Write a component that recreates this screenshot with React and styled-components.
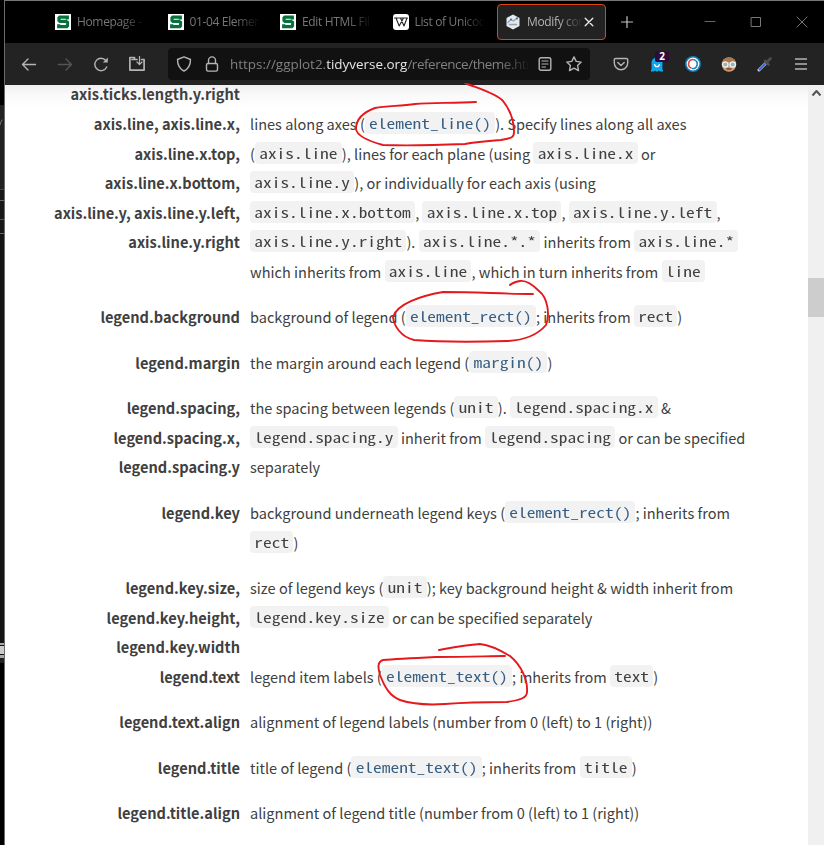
import React from "react";
import styled, { createGlobalStyle, css } from "styled-components";

const Global = createGlobalStyle`
  *, *::before, *::after { box-sizing: border-box; }
  html, body { margin: 0; background: #000; overflow: hidden; }
`;

const Screen = styled.div`
  width: 824px;
  height: 845px;
  display: flex;
  overflow: hidden;
  background: #000;
`;

const BackStrip = styled.div`
  width: 4px;
  flex: none;
  display: flex;
  flex-direction: column;
  background: #000;
`;
const BackPiece = styled.div`
  flex: none;
  overflow: hidden;
  height: ${(p) => p.$h}px;
  background: ${(p) => p.$bg};
`;

const Browser = styled.div`
  width: 820px;
  flex: none;
  display: flex;
  flex-direction: column;
  border-left: 1px solid #6b6b6b;
  border-top: 1px solid #777;
`;

const TabStrip = styled.div`
  height: 42px;
  flex: none;
  display: flex;
  align-items: center;
  padding-left: 40px;
  background: #000;
`;
const Tab = styled.div`
  width: 108.5px;
  height: 36px;
  flex: none;
  margin: 0 2px;
  padding: 0 0 0 7px;
  display: flex;
  align-items: center;
  border: 1px solid transparent;
  border-radius: 4px;
  color: #777;
  ${(p) =>
    p.$active &&
    css`
      background: #222;
      border-color: #d9480f;
      color: #b5b5b5;
    `}
`;
const TabTitle = styled.span`
  width: ${(p) => p.$w}px;
  margin-left: 6px;
  overflow: hidden;
  white-space: nowrap;
  font: 12px/20px "Open Sans", "Noto Sans", sans-serif;
  letter-spacing: -0.35px;
  mask-image: linear-gradient(to right, #000 ${(p) => p.$w - 26}px, transparent ${(p) => p.$w - 1}px);
`;
const IconSlot = styled.span`
  width: ${(p) => p.$w || 36}px;
  height: 32px;
  flex: none;
  display: flex;
  align-items: center;
  justify-content: center;
  position: relative;
`;
const WindowButtons = styled.div`
  margin-left: auto;
  margin-right: -1px;
  display: flex;
`;

const Toolbar = styled.div`
  height: 42px;
  flex: none;
  display: flex;
  align-items: center;
  padding-left: 6px;
  background: #232323;
`;
const UrlBar = styled.div`
  width: 422px;
  height: 32px;
  flex: none;
  margin: 0 13px;
  padding-left: 2px;
  display: flex;
  align-items: center;
  border-radius: 4px;
  background: #111;
`;
const Url = styled.span`
  width: 300px;
  margin-left: 4px;
  overflow: hidden;
  white-space: nowrap;
  color: #808080;
  font: 13.45px/22px "Open Sans", "Noto Sans", sans-serif;
  mask-image: linear-gradient(to right, #000 270px, transparent 300px);
`;
const Domain = styled.span`
  color: #e4e4e4;
`;
const UrlPath = styled.span`
  letter-spacing: -0.45px;
`;
const Badge = styled.span`
  position: absolute;
  left: 16px;
  top: 3px;
  width: 14px;
  height: 11px;
  border-radius: 2px;
  background: #300a3a;
  color: #fff;
  text-align: center;
  font: bold 10px/11px "Open Sans", sans-serif;
`;

const Viewport = styled.div`
  flex: 1;
  min-height: 0;
  display: flex;
  position: relative;
  background: #fff;
`;
const Page = styled.main`
  width: 803px;
  flex: none;
  overflow: hidden;
  background: linear-gradient(to bottom, #f1eff1 0, #f9f9f9 9px, #fff 24px);
`;
const Definitions = styled.dl`
  margin: -5.6px 0 0;
  display: flex;
  flex-direction: column;
  color: #404040;
  font-family: "Noto Sans CJK SC", "Open Sans", sans-serif;
  font-size: 14.55px;
  line-height: 29.55px;
`;
const Entry = styled.div`
  display: grid;
  grid-template-columns: 235px 1fr;
  column-gap: 10px;
  margin-bottom: ${(p) => (p.$tight ? 0 : 16)}px;
`;
const Term = styled.dt`
  font-weight: 700;
  font-size: 14.6px;
  text-align: right;
`;
const Detail = styled.dd`
  margin: 0;
`;
const Line = styled.div`
  height: 29.55px;
  white-space: nowrap;
`;
const Code = styled.code`
  display: inline-block;
  height: 22px;
  padding: 0 4.3px;
  vertical-align: -1px;
  border-radius: 4px;
  background: #f2f2f2;
  color: ${(p) => (p.$link ? "#375f84" : "#404040")};
  font-family: "Noto Sans Mono CJK SC", "Liberation Mono", monospace;
  font-size: 17.4px;
  line-height: 22px;
  vertical-align: baseline;
`;
const CodeText = styled.span`
  display: block;
  transform: scaleY(0.8);
`;

const Scrollbar = styled.div`
  width: 16px;
  flex: none;
  display: flex;
  flex-direction: column;
  align-items: center;
  background: #f0f0f0;
`;
const ScrollThumb = styled.div`
  width: 16px;
  height: 39px;
  margin-top: 177px;
  background: #cdcdcd;
`;
const Ink = styled.svg`
  position: absolute;
  left: -5px;
  top: -85px;
  width: 824px;
  height: 845px;
  pointer-events: none;
  clip-path: inset(83px 0 0 0);
`;

const stroke = { fill: "none", stroke: "#b4b4b4", strokeWidth: 1.4, strokeLinecap: "round", strokeLinejoin: "round" };

const Glyph = ({ size = 16, children, ...rest }) => (
  <svg width={size} height={size} viewBox={`0 0 ${size} ${size}`} {...stroke} {...rest}>
    {children}
  </svg>
);

const SchoolIcon = () => (
  <Glyph stroke="none">
    <rect width="16" height="16" fill="#fff" />
    <path d="M12.300 5.500V3.200H4.800L4 4v2.500l1 .9h6l1.500 1v3.400l-.8.900H3.700V10.300" fill="none" stroke="#08703c" strokeWidth="3.200" strokeLinecap="butt" strokeLinejoin="miter" />
  </Glyph>
);
const WikiIcon = () => (
  <Glyph stroke="none">
    <rect width="16" height="16" rx="3" fill="#fff" />
    <path d="M1.500 4h4M6.500 4h4M11 4h3.500M3 4l3.200 8L10.500 4M7.500 4l3.500 8 3-8" fill="none" stroke="#222" strokeWidth="1.100" />
  </Glyph>
);
const HexIcon = () => (
  <Glyph stroke="none">
    <path d="M8 .5 14.500 4v8L8 15.500 1.500 12V4z" fill="#e6e8ea" />
    <path d="M3 8.500 6 5.500 8.500 7 12 4" fill="none" stroke="#8ba6c4" />
    <circle cx="6" cy="5.500" r="1" fill="#3d6da5" />
    <circle cx="12" cy="4.500" r="1" fill="#3d6da5" />
    <path d="M4.500 10.500h7" stroke="#9ba1a8" strokeWidth="1.500" />
  </Glyph>
);

const tabs = [
  { icon: <SchoolIcon />, title: "Homepage -", w: 70 },
  { icon: <SchoolIcon />, title: "01-04 Elemen", w: 71 },
  { icon: <SchoolIcon />, title: "Edit HTML Fil", w: 71 },
  { icon: <WikiIcon />, title: "List of Unicod", w: 71 },
  { icon: <HexIcon />, title: "Modify con", w: 57, active: true },
];

// `name` marks inline code, [name] marks a linked function.
const entries = [
  { terms: ["axis.ticks.length.y.right"], lines: [], tight: true },
  {
    terms: ["axis.line, axis.line.x,", "axis.line.x.top,", "axis.line.x.bottom,", "axis.line.y, axis.line.y.left,", "axis.line.y.right"],
    lines: [
      "lines along axes ([element_line()]). Specify lines along all axes",
      "(`axis.line`), lines for each plane (using `axis.line.x` or",
      "`axis.line.y`), or individually for each axis (using",
      "`axis.line.x.bottom`, `axis.line.x.top`, `axis.line.y.left`,",
      "`axis.line.y.right`). `axis.line.*.*` inherits from `axis.line.*`",
      "which inherits from `axis.line`, which in turn inherits from `line`",
    ],
  },
  { terms: ["legend.background"], lines: ["background of legend ([element_rect()]; inherits from `rect`)"] },
  { terms: ["legend.margin"], lines: ["the margin around each legend ([margin()])"] },
  {
    terms: ["legend.spacing,", "legend.spacing.x,", "legend.spacing.y"],
    lines: [
      "the spacing between legends (`unit`). `legend.spacing.x` &",
      "`legend.spacing.y` inherit from `legend.spacing` or can be specified",
      "separately",
    ],
  },
  { terms: ["legend.key"], lines: ["background underneath legend keys ([element_rect()]; inherits from", "`rect`)"] },
  {
    terms: ["legend.key.size,", "legend.key.height,", "legend.key.width"],
    lines: ["size of legend keys (`unit`); key background height & width inherit from", "`legend.key.size` or can be specified separately"],
    tight: true,
  },
  { terms: ["legend.text"], lines: ["legend item labels ([element_text()]; inherits from `text`)"] },
  { terms: ["legend.text.align"], lines: ["alignment of legend labels (number from 0 (left) to 1 (right))"] },
  { terms: ["legend.title"], lines: ["title of legend ([element_text()]; inherits from `title`)"] },
  { terms: ["legend.title.align"], lines: ["alignment of legend title (number from 0 (left) to 1 (right))"] },
];

const rich = (text) =>
  text.split(/(`[^`]+`|\[[^\]]+\])/).map((part, i) =>
    part[0] === "`" || part[0] === "[" ? (
      <Code key={i} $link={part[0] === "["}>
        <CodeText>{part.slice(1, -1)}</CodeText>
      </Code>
    ) : (
      part
    )
  );

export default function App() {
  return (
    <Screen>
      <Global />
      <BackStrip>
        <BackPiece $h={105} $bg="#000" />
        <BackPiece $h={10} $bg="#222" />
        <BackPiece $h={10} $bg="#222">
          <Glyph size={4} height="10" viewBox="0 0 4 10" stroke="#777" strokeWidth="1"><path d="M2 1 0 5l2 4" /></Glyph>
        </BackPiece>
        <BackPiece $h={64} $bg="#222" />
        <BackPiece $h={1} $bg="#444" />
        <BackPiece $h={10} $bg="#181818" />
        <BackPiece $h={1} $bg="#666" />
        <BackPiece $h={18} $bg="#181818" />
        <BackPiece $h={1} $bg="#555" />
        <BackPiece $h={13} $bg="#181818" />
        <BackPiece $h={1} $bg="#666" />
        <BackPiece $h={409} $bg="#151412" />
        <BackPiece $h={2} $bg="#aaa" />
        <BackPiece $h={1} $bg="#111" />
        <BackPiece $h={8} $bg="#ccc" />
        <BackPiece $h={1} $bg="#111" />
        <BackPiece $h={3} $bg="#aaa" />
        <BackPiece $h={5} $bg="#222" />
      </BackStrip>
      <Browser>
        <TabStrip>
          {tabs.map((t) => (
            <Tab key={t.title} $active={t.active}>
              {t.icon}
              <TabTitle $w={t.w}>{t.title}</TabTitle>
              {t.active && (
                <Glyph size={10} stroke="#eee" strokeWidth="1.300">
                  <path d="M1.200 1.200l7.600 7.600M8.800 1.200 1.200 8.800" />
                </Glyph>
              )}
            </Tab>
          ))}
          <IconSlot $w={38}>
            <Glyph stroke="#c4c4c4" strokeWidth="1.200"><path d="M8 2.500v11M2.500 8h11" /></Glyph>
          </IconSlot>
          <WindowButtons>
            <IconSlot $w={46}><Glyph size={12} stroke="#666" strokeWidth="1"><path d="M1 5.500h10" /></Glyph></IconSlot>
            <IconSlot $w={46}><Glyph size={12} stroke="#777" strokeWidth="1"><path d="M1.500 1.500h9v9h-9z" strokeLinejoin="miter" /></Glyph></IconSlot>
            <IconSlot $w={46}><Glyph size={12} stroke="#777" strokeWidth="1"><path d="M1 1l10 10M11 1 1 11" /></Glyph></IconSlot>
          </WindowButtons>
        </TabStrip>
        <Toolbar>
          <IconSlot><Glyph><path d="M14.500 8.500H1.500M7 3 1.500 8.500 7 14" /></Glyph></IconSlot>
          <IconSlot><Glyph stroke="#555"><path d="M1.500 8.500h13M9 3l5.500 5.500L9 14" /></Glyph></IconSlot>
          <IconSlot>
            <Glyph>
              <path d="M13.700 11A6.200 6.200 0 1 1 12.800 4.500" />
              <path d="M14.800 1.500V6.500H9.800z" fill="#b4b4b4" stroke="none" />
            </Glyph>
          </IconSlot>
          <IconSlot>
            <Glyph strokeWidth="1.700">
              <path d="M5.500 3.500V1.500H.9v12.600h14.200V3.500H12.500M3 3.500h5" />
              <path d="M10.500 .5v7.500M8 6l2.500 2.500L13 6" strokeWidth="1.200" />
            </Glyph>
          </IconSlot>
          <UrlBar>
            <IconSlot $w={28}><Glyph><path d="M8 .9 14.500 3.500C14.500 9 12 13 8 15 4 13 1.500 9 1.500 3.500z" /></Glyph></IconSlot>
            <IconSlot $w={28}>
              <Glyph><rect x="2.500" y="7.500" width="11" height="7.600" rx="1.500" /><path d="M4.500 7.500V4.400a3.500 3.500 0 0 1 7 0V7.500" /></Glyph>
            </IconSlot>
            <Url>https://ggplot2.<Domain>tidyverse.org</Domain><UrlPath>/reference/theme.htm</UrlPath></Url>
            <IconSlot $w={30}>
              <Glyph size={14}><rect x="1.200" y=".7" width="11.600" height="12.600" rx="1.800" /><path d="M4 4h6M4 7h6M4 10h3.500" strokeWidth="1.200" /></Glyph>
            </IconSlot>
            <IconSlot $w={28}>
              <Glyph><path d="M8 .9l2.200 4.500 5 .7-3.600 3.500.9 5L8 12.200l-4.500 2.400.9-5L.8 6.100l5-.7z" /></Glyph>
            </IconSlot>
          </UrlBar>
          <IconSlot>
            <Glyph><path d="M2.500 2.500h11a1.200 1.200 0 0 1 1.200 1.200V7a6.700 6.700 0 0 1-13.400 0V3.700a1.200 1.200 0 0 1 1.200-1.200zM4.800 6.500 8 9.500l3.200-3" /></Glyph>
          </IconSlot>
          <IconSlot>
            <Glyph stroke="none">
              <path d="M2 15.500V14c1-.3.500-2 .5-7.500A5.500 5 0 0 1 13.500 6.500c0 5.500-.5 7.200.5 7.500v1.500H11l-1-1-1 1H7l-1-1-1 1z" fill="#12a5ee" />
              <path d="M5.500 8.500c.8 3 4.200 3 5 0" fill="none" stroke="#fff" strokeWidth="1.200" />
            </Glyph>
            <Badge>2</Badge>
          </IconSlot>
          <IconSlot>
            <Glyph stroke="none">
              <circle cx="8" cy="8" r="8" fill="#137bb4" />
              <circle cx="8" cy="8" r="6.400" fill="#fff" />
              <path d="M8 3.500A4.500 4.500 0 0 0 6 12" fill="none" stroke="#d6493f" strokeWidth="1.600" />
              <path d="M9 3.700A4.500 4.500 0 0 1 7.500 12.500" fill="none" stroke="#2182b9" strokeWidth="1.600" />
            </Glyph>
          </IconSlot>
          <IconSlot>
            <Glyph stroke="none">
              <circle cx="8" cy="8.500" r="7.300" fill="#d09c76" />
              <path d="M1.500 6C3 0 13 0 14.500 6z" fill="#a8794f" />
              <circle cx="4.300" cy="8.500" r="2.700" fill="#8fb6bd" stroke="#eef5f5" strokeWidth="1.200" />
              <circle cx="11.700" cy="8.500" r="2.700" fill="#8fb6bd" stroke="#eef5f5" strokeWidth="1.200" />
              <path d="M6 13h4" stroke="#79402e" />
            </Glyph>
          </IconSlot>
          <IconSlot>
            <Glyph>
              <path d="M2 14 9 7" stroke="#ccd5ef" strokeWidth="3" />
              <path d="M2.500 13.500 8 8" stroke="#3460dd" strokeWidth="1.800" />
              <path d="M8 5l3.500 3.500M10.500 5.500 13.500 2.500" stroke="#4c4c50" strokeWidth="2.800" />
            </Glyph>
          </IconSlot>
          <IconSlot><Glyph strokeLinecap="butt"><path d="M2 3h12M2 8h12M2 13h12" /></Glyph></IconSlot>
        </Toolbar>
        <Viewport>
          <Page>
            <Definitions>
              {entries.map((e) => (
                <Entry key={e.terms[0]} $tight={e.tight}>
                  <Term>{e.terms.map((t) => <Line key={t}>{t}</Line>)}</Term>
                  <Detail>{e.lines.map((l) => <Line key={l}>{rich(l)}</Line>)}</Detail>
                </Entry>
              ))}
            </Definitions>
          </Page>
          <Scrollbar>
            <Glyph size={16} stroke="#555" strokeWidth="2" strokeLinecap="butt"><path d="M4.500 10.500 8.500 6l4 4.500" /></Glyph>
            <ScrollThumb />
          </Scrollbar>
          <Ink viewBox="0 0 824 845" fill="none" stroke="#e5181c" strokeWidth="1.900" strokeLinecap="round" strokeLinejoin="round">
            <path d="M476 102C452 103 430 103 415 104 400 106 387 106 375 108 364 112 356 119 356 129 357 137 372 142 383 145 410 146 440 145 465 144 480 141 492 141 501 140 511 138 514 138 514 132 514 122 511 111 503 101 496 93 477 88 465 83" />
            <path d="M533 294C500 294 480 292 443 292 420 296 397 304 393 317 394 326 401 337 414 340 440 342 475 342 507 341 530 340 540 332 546 325 550 315 548 298 539 291 532 284 526 280 520 281 515 282 512 283 510 285" />
            <path d="M505 656C490 656 470 657 436 657 415 658 395 659 383 660 377 662 378 668 380 675 385 688 390 696 400 700 415 705 430 705 445 704 470 702 495 702 507 702 520 700 527 698 527 692 528 680 521 665 510 656 500 650 490 645 480 644 465 645 450 648 439 650" />
          </Ink>
        </Viewport>
      </Browser>
    </Screen>
  );
}
